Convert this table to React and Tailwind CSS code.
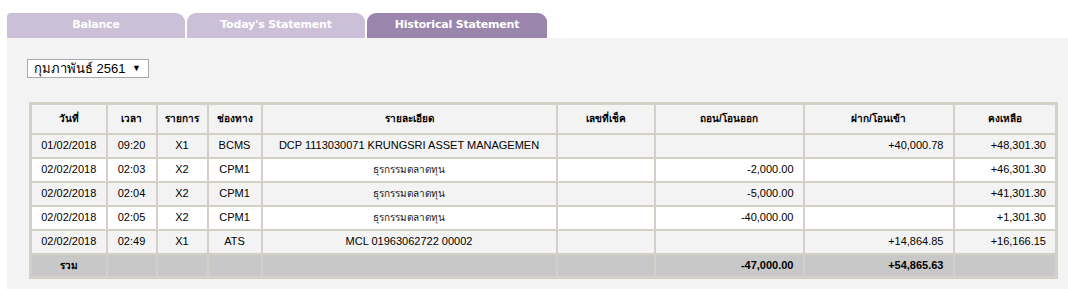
import React from 'react';

const tabs = [
  { label: 'Balance', active: false, round: 'rounded-tl-[4px] rounded-tr-[9px]' },
  { label: "Today's Statement", active: false, round: 'rounded-tl-[9px] rounded-tr-[9px]' },
  { label: 'Historical Statement', active: true, round: 'rounded-tl-[9px] rounded-tr-[9px]' },
];

const rows = [
  { date: '01/02/2018', time: '09:20', type: 'X1', ch: 'BCMS', detail: 'DCP 1113030071 KRUNGSRI ASSET MANAGEMEN', thai: false, out: '', inn: '+40,000.78', bal: '+48,301.30' },
  { date: '02/02/2018', time: '02:03', type: 'X2', ch: 'CPM1', detail: 'ธุรกรรมตลาดทุน', thai: true, out: '-2,000.00', inn: '', bal: '+46,301.30' },
  { date: '02/02/2018', time: '02:04', type: 'X2', ch: 'CPM1', detail: 'ธุรกรรมตลาดทุน', thai: true, out: '-5,000.00', inn: '', bal: '+41,301.30' },
  { date: '02/02/2018', time: '02:05', type: 'X2', ch: 'CPM1', detail: 'ธุรกรรมตลาดทุน', thai: true, out: '-40,000.00', inn: '', bal: '+1,301.30' },
  { date: '02/02/2018', time: '02:49', type: 'X1', ch: 'ATS', detail: 'MCL 01963062722 00002', thai: false, out: '', inn: '+14,864.85', bal: '+16,166.15' },
];

const headers = ['วันที่', 'เวลา', 'รายการ', 'ช่องทาง', 'รายละเอียด', 'เลขที่เช็ค', 'ถอน/โอนออก', 'ฝาก/โอนเข้า', 'คงเหลือ'];
const widths = ['w-[76px]', 'w-[50px]', 'w-[51px]', 'w-[54px]', 'w-[295px]', 'w-[98px]', 'w-[149px]', 'w-[150px]', 'w-[103px]'];

const td = 'border-2 border-[#d4d0c8] h-[24px] px-1 py-0';

export default function App() {
  return (
    <div className="bg-white h-[289px] overflow-hidden pt-[13px] pl-[7px] font-['Liberation_Sans',Arial,sans-serif] text-black">
      <div className="flex gap-[2px]">
        {tabs.map((t) => (
          <div
            key={t.label}
            className={`${t.round} h-[25px] flex items-center justify-center text-[11px] font-bold text-white font-['DejaVu_Sans',Verdana,sans-serif] tracking-[-0.2px] ${t.active ? 'bg-[#9a85ad] w-[180px]' : 'bg-[#ccc0d8] w-[178px]'}`}
          >
            {t.label}
          </div>
        ))}
      </div>

      <div className="bg-[#f3f3f3] h-[270px] pt-[21px] pl-[20px]">
        <div className="w-[122px] h-[19px] border border-[#a9a9a9] bg-white flex items-center justify-between pl-[6px] pr-[7px] text-[13px] leading-none">
          <span>กุมภาพันธ์ 2561</span>
          <span className="text-[9px]">▼</span>
        </div>

        <table className="mt-[24px] ml-[2px] table-fixed border-collapse border-[3px] border-[#d4d0c8] w-[1026px] text-[11px]">
          <colgroup>
            {widths.map((w, i) => (
              <col key={i} className={w} />
            ))}
          </colgroup>
          <thead>
            <tr className="bg-[#f3f3f3]">
              {headers.map((h) => (
                <th key={h} className="border-2 border-[#d4d0c8] h-[30px] text-[10px] font-bold text-center">
                  {h}
                </th>
              ))}
            </tr>
          </thead>
          <tbody>
            {rows.map((r, i) => (
              <tr key={i} className={i % 2 === 0 ? 'bg-[#f3f3f3]' : 'bg-white'}>
                <td className={`${td} text-center`}>{r.date}</td>
                <td className={`${td} text-center`}>{r.time}</td>
                <td className={`${td} text-center`}>{r.type}</td>
                <td className={`${td} text-center`}>{r.ch}</td>
                <td className={`${td} text-center whitespace-nowrap ${r.thai ? 'text-[10px] text-[#222]' : ''}`}>{r.detail}</td>
                <td className={td}></td>
                <td className={`${td} text-right pr-[9px]`}>{r.out}</td>
                <td className={`${td} text-right pr-[9px]`}>{r.inn}</td>
                <td className={`${td} text-right pr-[9px]`}>{r.bal}</td>
              </tr>
            ))}
            <tr className="bg-[#c8c8c8] font-bold">
              <td className={`${td} text-center text-[10px]`}>รวม</td>
              <td className={td}></td>
              <td className={td}></td>
              <td className={td}></td>
              <td className={td}></td>
              <td className={td}></td>
              <td className={`${td} text-right pr-[9px]`}>-47,000.00</td>
              <td className={`${td} text-right pr-[9px]`}>+54,865.63</td>
              <td className={td}></td>
            </tr>
          </tbody>
        </table>
      </div>
    </div>
  );
}
